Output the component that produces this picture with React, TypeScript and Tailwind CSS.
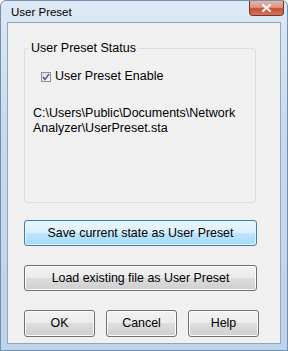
import { type FC } from "react";

const font = { fontFamily: '"Liberation Sans", Arial, sans-serif' };

const Btn: FC<{ label: string; primary?: boolean; className?: string }> = ({ label, primary, className }) => (
  <button
    className={
      "relative flex items-center justify-center rounded-[3px] border text-[12.4px] text-black " +
      (primary
        ? "border-[#3c7fb1] bg-[linear-gradient(to_bottom,#eaf6fd_0%,#d9f0fc_50%,#bee6fd_50%,#a7d9f5_100%)] shadow-[inset_0_0_0_1px_#e5f4fc]"
        : "border-[#707070] bg-[linear-gradient(to_bottom,#f2f2f2_0%,#ebebeb_50%,#dddddd_50%,#cfcfcf_100%)] shadow-[inset_0_0_0_1px_#fcfcfc]") +
      " " +
      (className ?? "")
    }
  >
    {label}
  </button>
);

const App: FC = () => {
  return (
    <div className="w-[288px] h-[351px] bg-white" style={font}>
      <div className="flex flex-col w-full h-full rounded-t-[6px] border border-[#6f8fb3] bg-[linear-gradient(to_bottom,#dde8f4_0%,#c9d9eb_40%,#bfd3e9_100%)]">
        {/* title bar */}
        <div className="flex h-[21px] shrink-0 items-start justify-between">
          <span className="pl-[10px] pt-[4px] text-[11.5px] leading-[14px] text-black">User Preset</span>
          <div className="mr-[3px] flex h-[15px] w-[35px] items-center justify-center rounded-b-[4px] border border-t-0 border-[#7a3528] bg-[linear-gradient(to_bottom,#e6b4a4_0%,#d99580_45%,#c54f36_55%,#d2765c_100%)]">
            <svg width="9" height="8" viewBox="0 0 9 8">
              <path d="M1 1 L8 7 M8 1 L1 7" stroke="#ffffff" strokeWidth="2" strokeLinecap="square" />
            </svg>
          </div>
        </div>

        {/* client area */}
        <div className="mx-[6px] mb-[6px] flex flex-1 flex-col border border-[#8ea6c2] bg-[#f0f0f0] px-[16px]">
          <fieldset className="mt-[18px] h-[162px] w-[232px] rounded-[3px] border border-[#d5dfe5] px-[8px]">
            <legend className="ml-[-4px] px-[2px] text-[12.5px] leading-[15px] text-black">User Preset Status</legend>
            <label className="mt-[13px] flex items-center gap-[4px] pl-[8px] text-[12.5px] leading-[15px] text-black">
              <span className="flex h-[10px] w-[10px] items-center justify-center border border-[#8e8f8f] bg-[linear-gradient(135deg,#dcdcdc,#fbfbfb)]">
                <svg width="8" height="8" viewBox="0 0 8 8">
                  <path d="M1 4 L3 6.5 L7 1" stroke="#4a5f97" strokeWidth="1.4" fill="none" />
                </svg>
              </span>
              User Preset Enable
            </label>
            <p className="mt-[22px] text-[12.5px] leading-[14.5px] text-black">
              C:\Users\Public\Documents\Network
              <br />
              Analyzer\UserPreset.sta
            </p>
          </fieldset>

          <Btn primary label="Save current state as User Preset" className="mt-[17px] h-[26px] w-[233px]" />
          <Btn label="Load existing file as User Preset" className="mt-[19px] h-[26px] w-[233px]" />

          <div className="mt-[19px] flex gap-[11px]">
            <Btn label="OK" className="h-[27px] w-[71px]" />
            <Btn label="Cancel" className="h-[27px] w-[71px]" />
            <Btn label="Help" className="h-[27px] w-[71px]" />
          </div>
        </div>
      </div>
    </div>
  );
};

export default App;
